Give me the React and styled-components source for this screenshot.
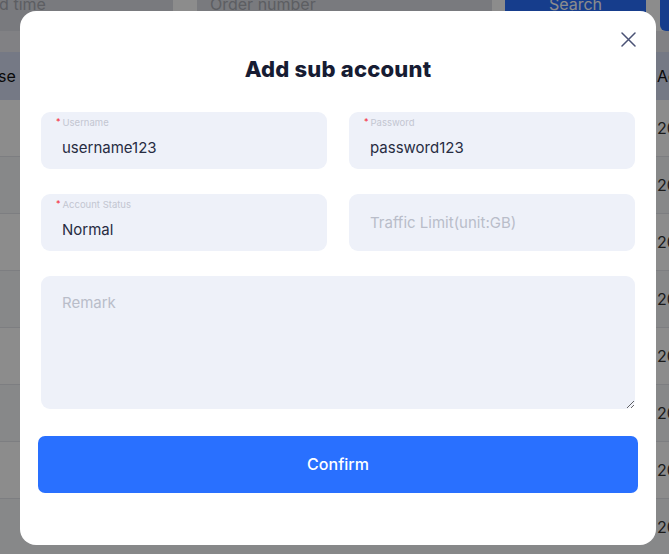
import React from "react";
import styled, { createGlobalStyle } from "styled-components";

const Global = createGlobalStyle`
  html, body { margin: 0; padding: 0; }
  body { width: 669px; height: 554px; overflow: hidden; font-family: Inter, "Noto Sans", sans-serif; background: #fff; }
  * { box-sizing: border-box; }
`;

const Page = styled.div`
  position: relative;
  width: 669px;
  height: 554px;
  overflow: hidden;
  background: #ffffff;
`;

const PageInner = styled.div`
  margin-top: -16px;
  margin-left: -60px;
  width: 837px;
`;

const FilterBar = styled.div`
  display: flex;
  align-items: stretch;
  height: 47px;
`;

const FilterInput = styled.div`
  width: ${(p) => p.$w}px;
  margin-left: ${(p) => p.$ml || 0}px;
  background: #dcdee5;
  color: #a9abb3;
  font-size: 16px;
  line-height: 19px;
  padding: 11px 0 0 ${(p) => p.$pl}px;
  border-radius: 4px;
`;

const BlueButton = styled.div`
  width: ${(p) => p.$w}px;
  background: #2970ff;
  color: #fff;
  font-size: 16px;
  line-height: 19px;
  text-align: center;
  padding-top: 11px;
  border-radius: 0 0 6px 6px;
  margin-left: ${(p) => p.$ml || 0}px;
`;

const Band = styled.div`
  height: 21px;
  background: #ebecf0;
`;

const TableRow = styled.div`
  display: grid;
  grid-template-columns: 1fr 120px;
  align-items: center;
  height: ${(p) => (p.$head ? 48 : 57)}px;
  background: ${(p) => (p.$head ? "#d6dcf2" : p.$alt ? "#f6f7fa" : "#ffffff")};
  border-bottom: ${(p) => (p.$head ? "none" : "1px solid #e4e6ec")};
  color: ${(p) => (p.$head ? "#111" : "#333")};
  font-size: 16px;
  padding-left: 5px;
`;

const Overlay = styled.div`
  position: absolute;
  inset: 0;
  background: rgba(0, 0, 0, 0.45);
`;

const Modal = styled.div`
  position: absolute;
  left: 20px;
  top: 11px;
  width: 636px;
  height: 534px;
  background: #fff;
  border-radius: 16px;
  padding: 42px 21px 0 21px;
  display: flex;
  flex-direction: column;
`;

const CloseBtn = styled.button`
  position: absolute;
  right: 18px;
  top: 18px;
  width: 20px;
  height: 20px;
  padding: 0;
  border: none;
  background: transparent;
  display: flex;
  align-items: center;
  justify-content: center;
  color: #4a5275;
`;

const Title = styled.h2`
  margin: 0;
  text-align: center;
  font-family: Inter, sans-serif;
  font-weight: 800;
  font-size: 22px;
  line-height: 32px;
  color: #171c33;
  letter-spacing: 0.2px;
`;

const Grid = styled.div`
  margin-top: 27px;
  display: grid;
  grid-template-columns: 1fr 1fr;
  column-gap: 22px;
  row-gap: 25px;
`;

const Field = styled.label`
  position: relative;
  display: flex;
  flex-direction: column;
  justify-content: ${(p) => (p.$label ? "flex-start" : "center")};
  height: 57px;
  background: #eef1f9;
  border-radius: 9px;
  padding: ${(p) => (p.$label ? "5px 21px 0 21px" : "0 21px")};
`;

const Label = styled.span`
  display: flex;
  align-items: flex-start;
  font-size: 9.5px;
  line-height: 12px;
  color: #c3c6d1;
  margin-left: -6px;
`;

const Star = styled.span`
  color: #f5222d;
  font-size: 9px;
  margin-right: 2px;
  line-height: 10px;
`;

const Input = styled.input`
  border: none;
  outline: none;
  background: transparent;
  padding: 0;
  margin-top: ${(p) => (p.$label ? "9px" : "0")};
  font-family: Inter, sans-serif;
  font-size: 15px;
  color: #272c42;
  width: 100%;
  &::placeholder { color: #b9bdc9; }
`;

const TextArea = styled.textarea`
  grid-column: 1 / span 2;
  height: 133px;
  border: none;
  outline: none;
  resize: vertical;
  background: #eef1f9;
  border-radius: 9px;
  padding: 17px 21px;
  font-family: Inter, sans-serif;
  font-size: 15px;
  color: #272c42;
  &::placeholder { color: #b9bdc9; }
`;

const Confirm = styled.button`
  margin: 27px -3px 0 -3px;
  height: 57px;
  border: none;
  border-radius: 7px;
  background: #2970ff;
  color: #fff;
  font-family: Inter, sans-serif;
  font-size: 16px;
  font-weight: 500;
  padding-bottom: 3px;
  cursor: pointer;
`;

export default function App() {
  return (
    <>
      <Global />
      <Page>
        <PageInner>
          <FilterBar>
            <FilterInput $w={233} $pl={12}>Expired time</FilterInput>
            <FilterInput $w={295} $pl={13} $ml={24}>Order number</FilterInput>
            <BlueButton $w={141} $ml={13}>Search</BlueButton>
            <BlueButton $w={100} $ml={14}>Add</BlueButton>
          </FilterBar>
          <Band />
          <TableRow $head>
            <span>Purchase user</span>
            <span>Ac</span>
          </TableRow>
          {Array.from({ length: 8 }).map((_, i) => (
            <TableRow key={i} $alt={i % 2 === 1}>
              <span />
              <span>2024</span>
            </TableRow>
          ))}
        </PageInner>
        <Overlay />
        <Modal>
          <CloseBtn aria-label="Close">
            <svg width="15" height="15" viewBox="0 0 15 15" fill="none">
              <path d="M1 1L14 14M14 1L1 14" stroke="currentColor" strokeWidth="1.5" strokeLinecap="round" />
            </svg>
          </CloseBtn>
          <Title>Add sub account</Title>
          <Grid>
            <Field $label>
              <Label><Star>*</Star>Username</Label>
              <Input $label defaultValue="username123" readOnly />
            </Field>
            <Field $label>
              <Label><Star>*</Star>Password</Label>
              <Input $label defaultValue="password123" readOnly />
            </Field>
            <Field $label>
              <Label><Star>*</Star>Account Status</Label>
              <Input $label defaultValue="Normal" readOnly />
            </Field>
            <Field>
              <Input placeholder="Traffic Limit(unit:GB)" />
            </Field>
            <TextArea placeholder="Remark" />
          </Grid>
          <Confirm>Confirm</Confirm>
        </Modal>
      </Page>
    </>
  );
}
